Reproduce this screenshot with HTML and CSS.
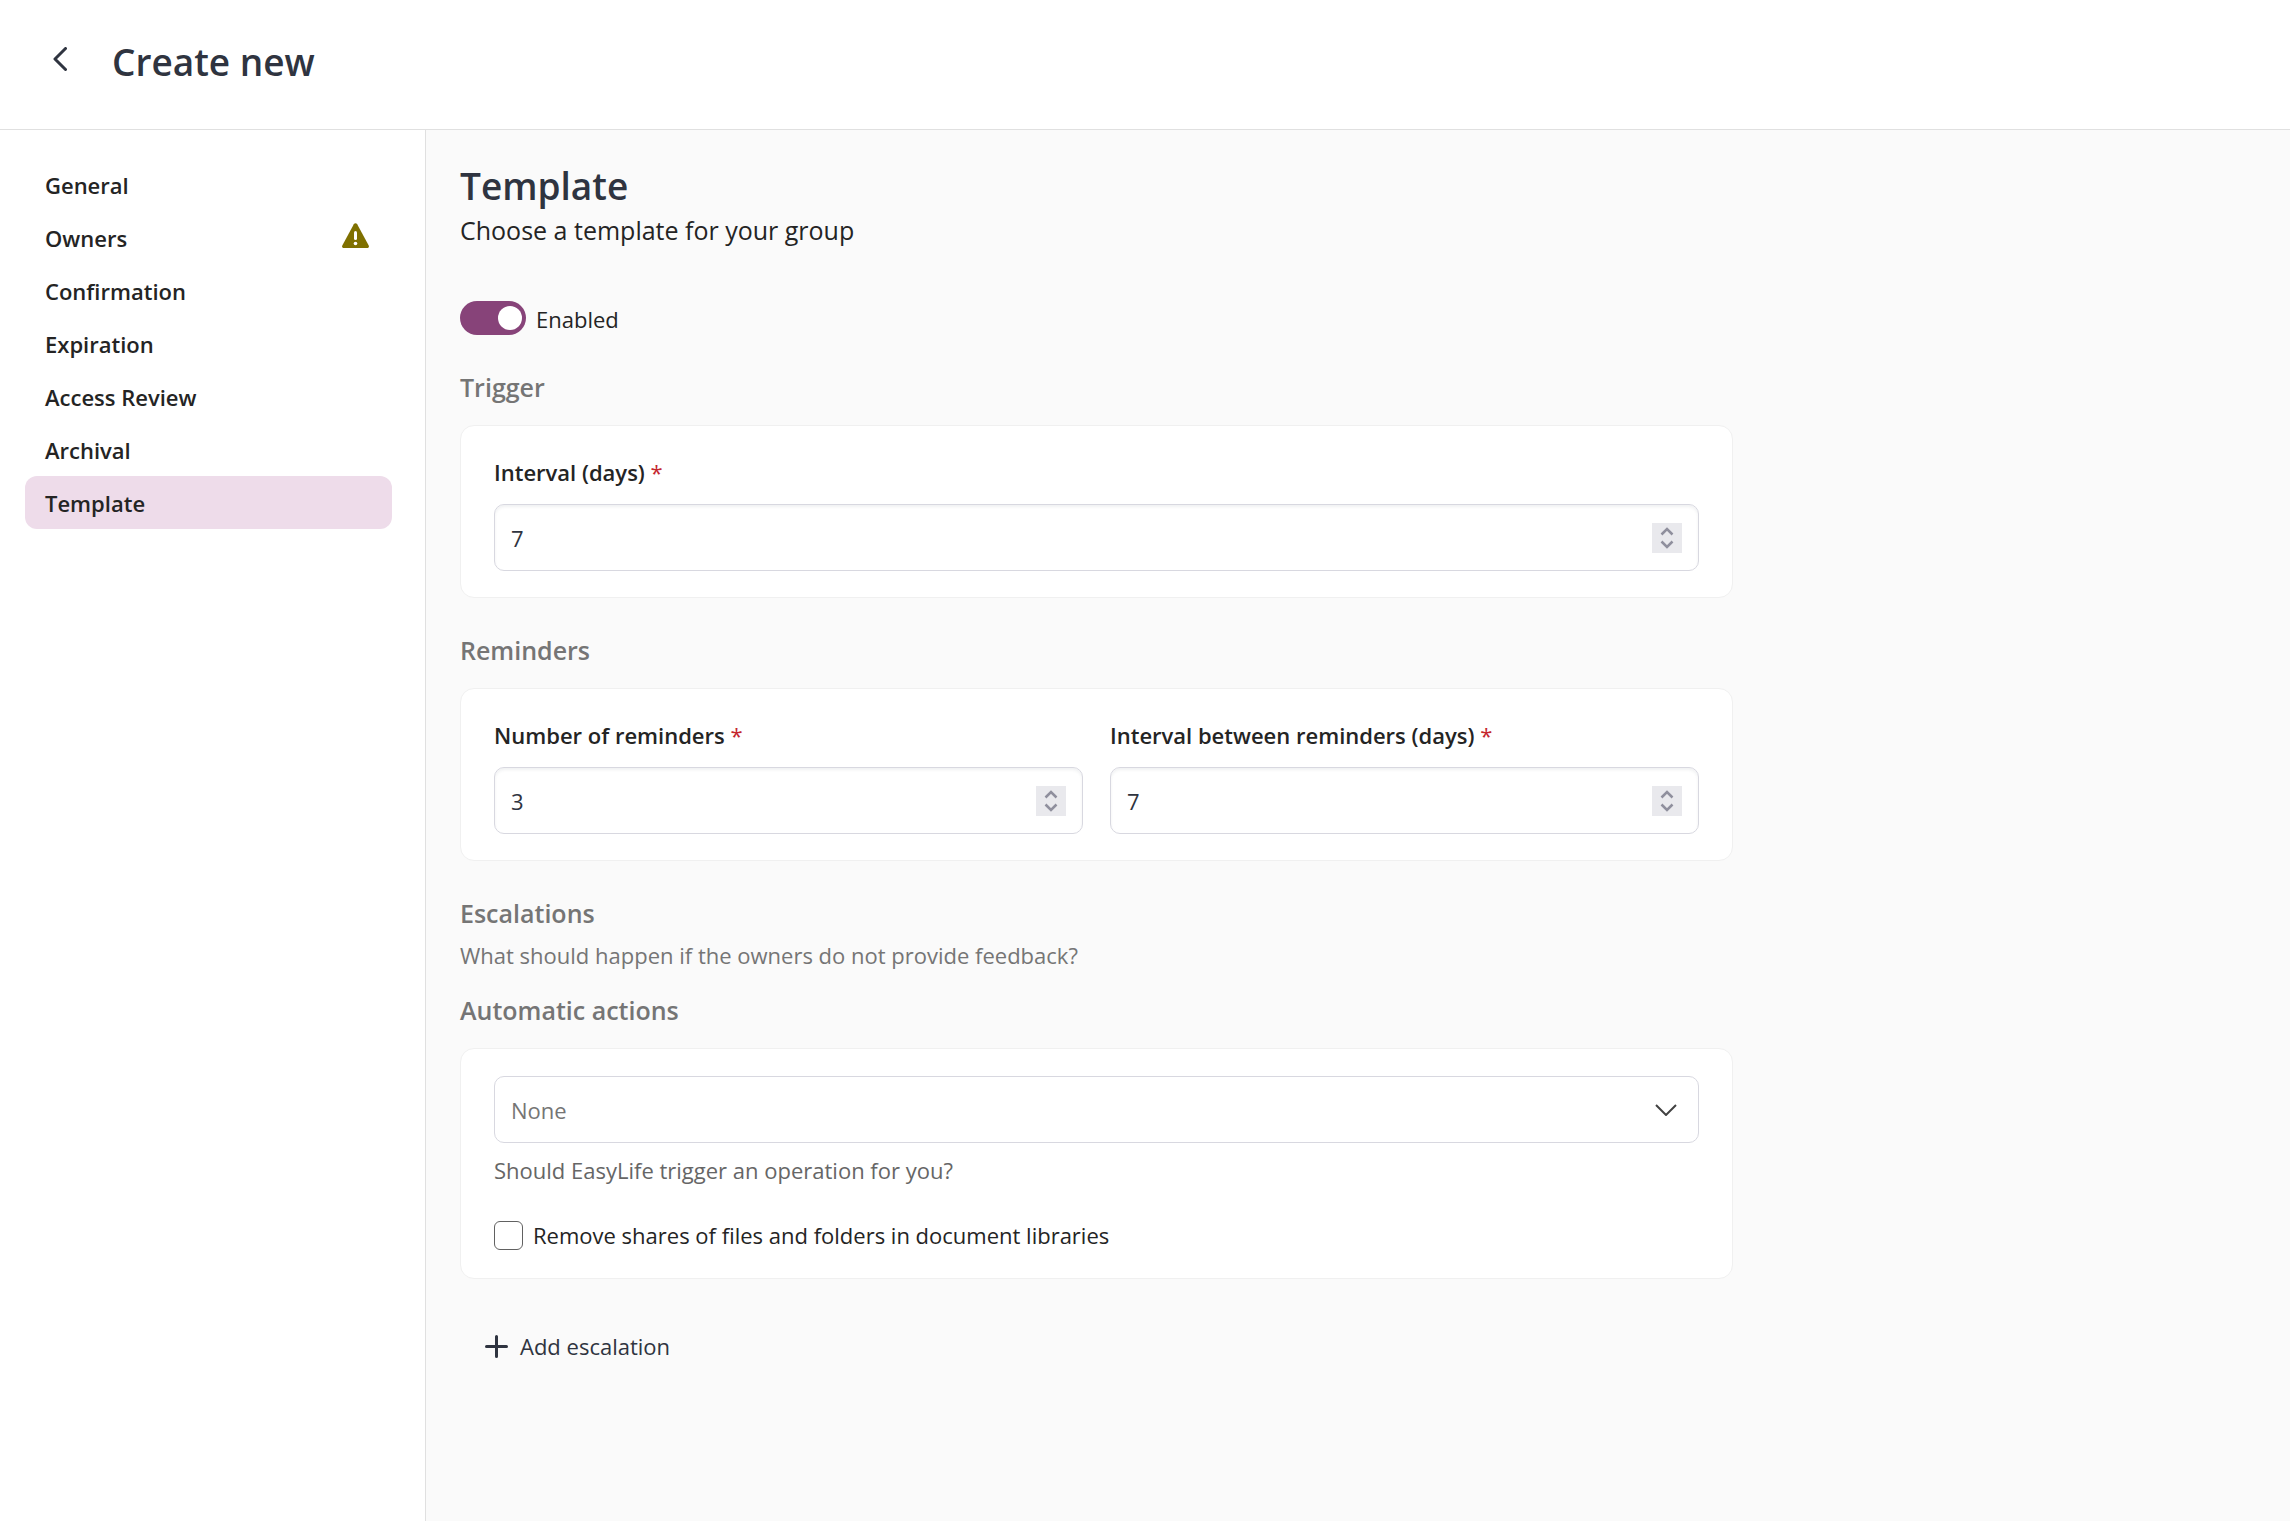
FILE: index.html
```html
<!DOCTYPE html>
<html lang="en">

  <head>
    <meta charset="utf-8">
    <title>Create new</title>
    <link rel="stylesheet" href="styles.css">
  </head>

  <body>
    <header class="topbar">
      <button type="button" class="back" aria-label="Back">
        <svg width="14" height="24" viewBox="0 0 14 24"><path d="M12.500 1.500 2 12l10.500 10.500"/></svg>
      </button>
      <h1 class="title">Create new</h1>
    </header>

    <div class="layout">
      <nav class="sidebar">
        <a href="#general" class="nav-item">General</a>
        <a href="#owners" class="nav-item">Owners
          <svg class="warning" width="27" height="25" viewBox="0 0 27 25">
            <path d="M11.800 1.200a2 2 0 0 1 3.400 0l11.500 21.300c.7 1.300-.1 2.500-1.500 2.500H1.800C.4 25-.4 23.800.3 22.500z"/>
            <rect x="12" y="8" width="3" height="9" rx="1.500"/>
            <circle cx="13.500" cy="20.500" r="1.800"/>
          </svg>
        </a>
        <a href="#confirmation" class="nav-item">Confirmation</a>
        <a href="#expiration" class="nav-item">Expiration</a>
        <a href="#access-review" class="nav-item">Access Review</a>
        <a href="#archival" class="nav-item">Archival</a>
        <a href="#template" class="nav-item active" aria-current="page">Template</a>
      </nav>

      <main class="content">
        <form class="form" action="">
          <h2 class="title">Template</h2>
          <p class="subtitle">Choose a template for your group</p>

          <label class="toggle-row"><input type="checkbox" class="toggle" checked>Enabled</label>

          <h3 class="section">Trigger</h3>
          <div class="card">
            <div class="field">
              <label for="interval">Interval (days) <span class="required">*</span></label>
              <div class="number">
                <input type="number" id="interval" value="7">
                <svg class="spinner" width="30" height="30" viewBox="0 0 30 30"><path d="M9.500 11.500 15 6l5.500 5.500M9.500 18.500 15 24l5.500-5.500"/></svg>
              </div>
            </div>
          </div>

          <h3 class="section">Reminders</h3>
          <div class="card">
            <div class="field">
              <label for="reminders">Number of reminders <span class="required">*</span></label>
              <div class="number">
                <input type="number" id="reminders" value="3">
                <svg class="spinner" width="30" height="30" viewBox="0 0 30 30"><path d="M9.500 11.500 15 6l5.500 5.500M9.500 18.500 15 24l5.500-5.500"/></svg>
              </div>
            </div>
            <div class="field">
              <label for="between">Interval between reminders (days) <span class="required">*</span></label>
              <div class="number">
                <input type="number" id="between" value="7">
                <svg class="spinner" width="30" height="30" viewBox="0 0 30 30"><path d="M9.500 11.500 15 6l5.500 5.500M9.500 18.500 15 24l5.500-5.500"/></svg>
              </div>
            </div>
          </div>

          <h3 class="section">Escalations</h3>
          <p class="hint">What should happen if the owners do not provide feedback?</p>

          <h3 class="section section-sub"><label for="action">Automatic actions</label></h3>
          <div class="card card-actions">
            <div class="select">
              <select id="action">
                <option>None</option>
              </select>
              <svg class="chevron" width="22" height="12" viewBox="0 0 22 12"><path d="M1 1l10 10L21 1"/></svg>
            </div>
            <p class="help">Should EasyLife trigger an operation for you?</p>
            <label class="check-row"><input type="checkbox" class="check">Remove shares of files and folders in document libraries</label>
          </div>

          <button type="button" class="add">
            <svg width="23" height="23" viewBox="0 0 23 23"><path d="M11.500 1.500v20M1.500 11.500h20"/></svg>
            Add escalation
          </button>
        </form>
      </main>
    </div>
  </body>

</html>
```

FILE: styles.css
```css
*{
    margin:0;
    padding:0;
    box-sizing:border-box;
}
body{
    display:flex;
    flex-direction:column;
    min-height:100vh;
    background-color:#fff;
    color:#242424;
    font-family:"Open Sans", "Segoe UI", sans-serif;
    font-size:22px;
    line-height:30px;
}
button,
input,
select{
    font:inherit;
    color:inherit;
    background:none;
    border:0;
}
svg{
    fill:none;
    flex-shrink:0;
}

/* header */
.topbar{
    display:flex;
    align-items:flex-start;
    gap:40px;
    padding:36px 47px 41px;
    border-bottom:1px solid #e0e0e0;
}
.title{
    color:#2f3440;
    font-size:37px;
    font-weight:600;
    line-height:52px;
}
.back{
    display:flex;
    align-items:center;
    justify-content:center;
    width:25px;
    height:46px;
    cursor:pointer;
}
.back svg{
    stroke:#2f3440;
    stroke-width:3;
    stroke-linecap:round;
    stroke-linejoin:round;
}

.layout{
    display:flex;
    flex:1;
}

/* side navigation */
.sidebar{
    width:426px;
    flex-shrink:0;
    padding:28px 33px 28px 25px;
    border-right:1px solid #e0e0e0;
}
.nav-item{
    display:flex;
    align-items:center;
    justify-content:space-between;
    height:53px;
    padding:0 23px 0 20px;
    border-radius:12px;
    color:#242424;
    font-weight:600;
    text-decoration:none;
}
.nav-item.active{
    background-color:#eedcea;
}
.warning{
    margin-bottom:4px;
    fill:#7f7000;
}
.warning rect,
.warning circle{
    fill:#fff;
}

/* form */
.content{
    flex:1;
    padding:30px 34px;
    background-color:#fafafa;
}
.form{
    max-width:1273px;
}
.subtitle{
    font-size:25px;
    line-height:36px;
}
.toggle-row{
    display:flex;
    align-items:flex-start;
    gap:10px;
    width:max-content;
    height:34px;
    margin-top:53px;
    line-height:36px;
}
.toggle{
    appearance:none;
    width:66px;
    height:34px;
    padding:5px 4px;
    border-radius:17px;
    background-color:#a0a0a0;
}
.toggle::before{
    content:"";
    display:block;
    width:24px;
    height:24px;
    border-radius:50%;
    background-color:#fff;
}
.toggle:checked{
    background-color:#874379;
}
.toggle:checked::before{
    margin-left:auto;
}
.section{
    margin:34px 0 20px;
    color:#757575;
    font-size:25px;
    font-weight:600;
    line-height:36px;
}
.section-sub{
    margin-top:22px;
}
.hint{
    margin-top:-11px;
    color:#757575;
}
.card{
    display:flex;
    gap:27px;
    padding:31px 33px 26px;
    background-color:#fff;
    border:1px solid #f0f0f0;
    border-radius:14px;
}
.card-actions{
    flex-direction:column;
    gap:0;
    padding:27px 33px 28px;
}
.field{
    flex:1;
}
.field label{
    display:block;
    margin-bottom:17px;
    font-weight:600;
}
.required{
    color:#c4262e;
    font-weight:400;
}
.number{
    display:flex;
    align-items:center;
    height:67px;
    padding:0 16px;
    border:1px solid #d8d8e0;
    border-radius:10px;
    box-shadow:inset 0 2px 3px rgba(47,52,64,.07);
    color:#2f3440;
}
.number input{
    flex:1;
    min-width:0;
    height:100%;
    outline:none;
    appearance:textfield;
}
.spinner{
    background-color:#e9e9ed;
    stroke:#8f8f9d;
    stroke-width:2.5;
}
.select{
    position:relative;
}
.select select{
    appearance:none;
    display:block;
    width:100%;
    height:67px;
    padding:0 60px 0 16px;
    border:1px solid #d8d8e0;
    border-radius:10px;
    color:#757575;
}
.chevron{
    position:absolute;
    right:22px;
    top:28px;
    stroke:#424242;
    stroke-width:2;
    pointer-events:none;
}
.help{
    margin-top:12px;
    color:#666;
}
.check-row{
    display:flex;
    align-items:center;
    gap:10px;
    width:max-content;
    margin-top:35px;
}
.check{
    appearance:none;
    width:29px;
    height:29px;
    border:1px solid #616161;
    border-radius:6px;
    background-color:#fff;
}
.check:checked{
    background-color:#874379;
}
.add{
    display:flex;
    align-items:center;
    gap:12px;
    margin-top:40px;
    padding:12px 25px;
    color:#2f3440;
    cursor:pointer;
}
.add svg{
    stroke:#2f3440;
    stroke-width:3;
    stroke-linecap:round;
}
```
